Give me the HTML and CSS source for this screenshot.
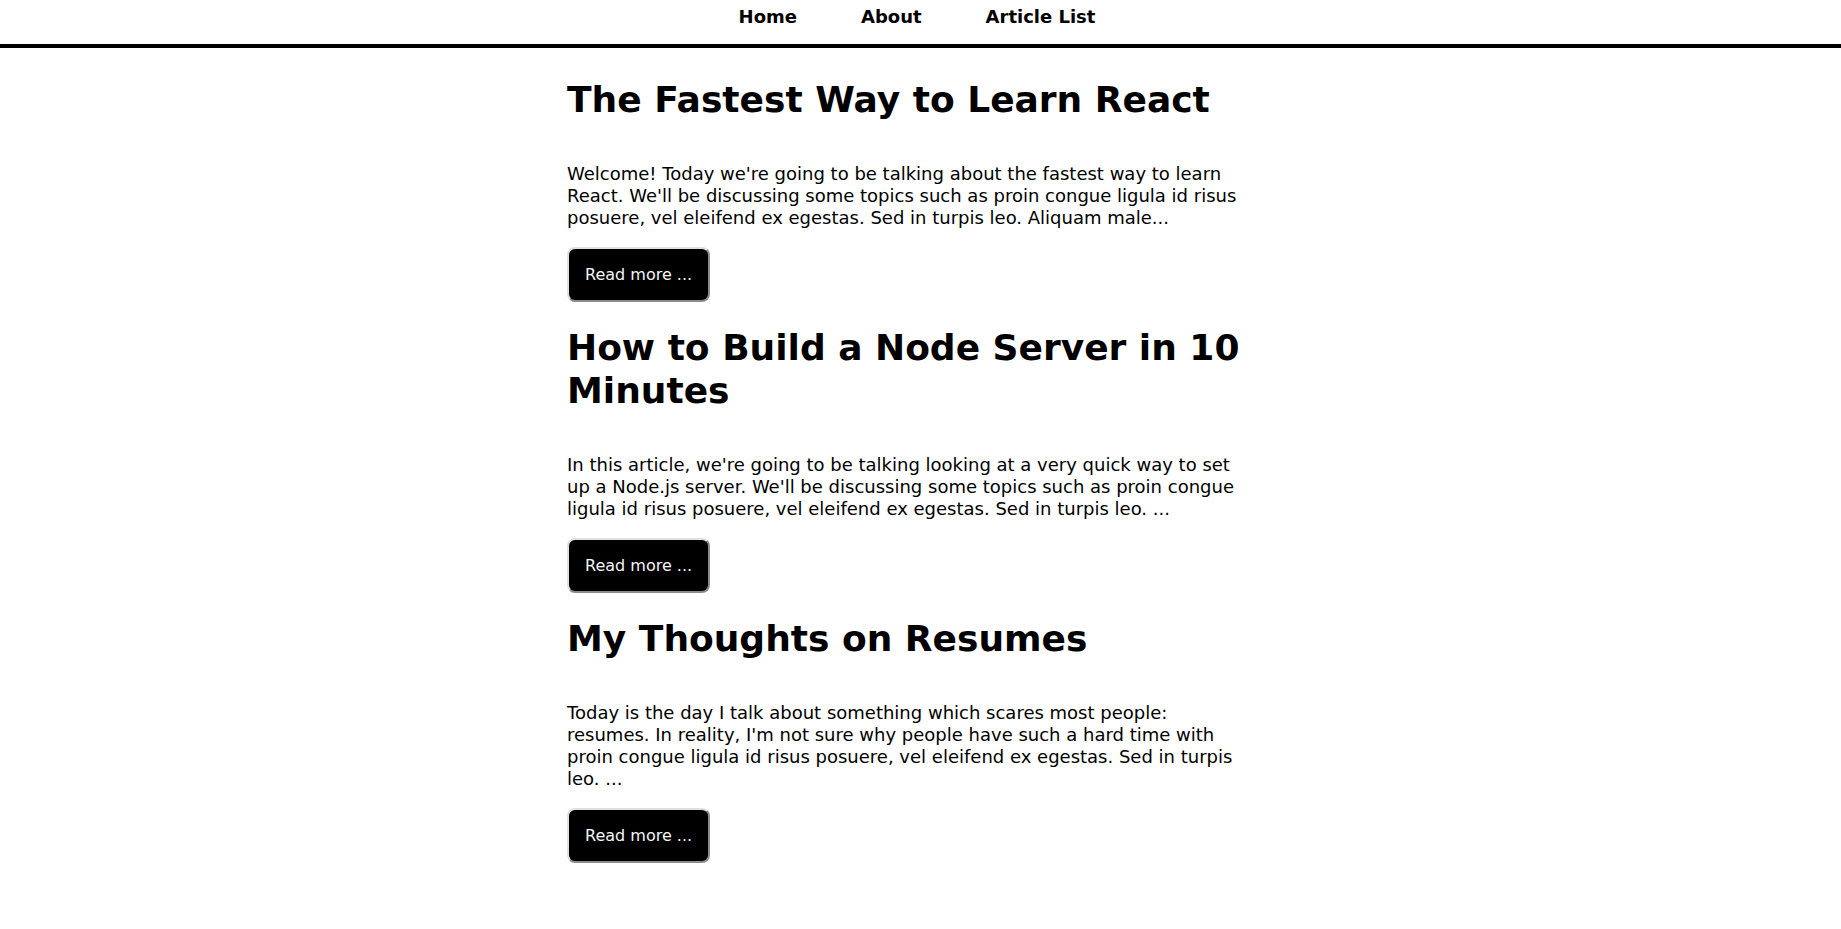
FILE: index.html
```
<!DOCTYPE html>
<html lang="en">
<head>
<meta charset="utf-8">
<title>My Blog</title>
<link rel="stylesheet" href="styles.css">
</head>
<body>
<nav class="nav">
  <ul class="nav-list">
    <li><a href="#home">Home</a></li>
    <li><a href="#about">About</a></li>
    <li><a href="#articles">Article List</a></li>
  </ul>
</nav>
<main class="page">
  <article class="post">
    <h1>The Fastest Way to Learn React</h1>
    <p>Welcome! Today we're going to be talking about the fastest way to learn React. We'll be discussing some topics such as proin congue ligula id risus posuere, vel eleifend ex egestas. Sed in turpis leo. Aliquam male...</p>
    <button type="button" class="more">Read more ...</button>
  </article>
  <article class="post">
    <h1>How to Build a Node Server in 10 Minutes</h1>
    <p>In this article, we're going to be talking looking at a very quick way to set up a Node.js server. We'll be discussing some topics such as proin congue ligula id risus posuere, vel eleifend ex egestas. Sed in turpis leo. ...</p>
    <button type="button" class="more">Read more ...</button>
  </article>
  <article class="post">
    <h1>My Thoughts on Resumes</h1>
    <p>Today is the day I talk about something which scares most people: resumes. In reality, I'm not sure why people have such a hard time with proin congue ligula id risus posuere, vel eleifend ex egestas. Sed in turpis leo. ...</p>
    <button type="button" class="more">Read more ...</button>
  </article>
</main>
</body>
</html>
```
FILE: styles.css
```
body {
  margin: 0;
  background: #fff;
  color: #000;
  font-family: "DejaVu Sans", sans-serif;
  font-size: 18px;
}

.nav {
  border-bottom: 4px solid #000;
}

.nav-list {
  display: flex;
  justify-content: center;
  gap: 64px;
  margin: 0;
  padding: 6px 7px 17px 0;
  list-style: none;
}

.nav-list a {
  color: #000;
  font-weight: bold;
  text-decoration: none;
}

.page {
  box-sizing: border-box;
  max-width: 707px;
  margin: 0 auto;
  padding: 6px 24px 64px 0;
}

.post h1 {
  margin: 0;
  padding: 24px 0;
  font-size: 36px;
  line-height: 43px;
}

.post p {
  margin: 18px 0;
  line-height: 22px;
}

.more {
  display: block;
  padding: 16px;
  border: 2px outset #e0e0e0;
  border-radius: 8px;
  background: #000;
  color: #f5f5f5;
  font-family: inherit;
  font-size: 16px;
}
```
